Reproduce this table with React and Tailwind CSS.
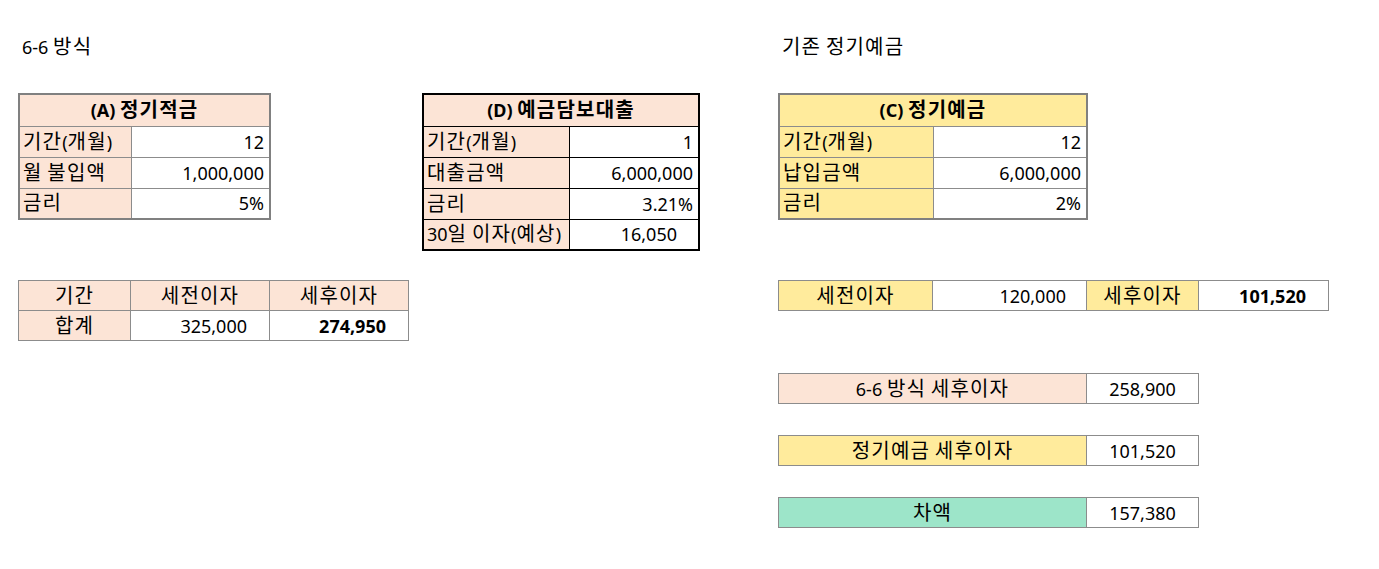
import React from "react";

const font = "font-['Noto_Sans','Noto_Sans_CJK_KR',sans-serif]";
const peach = "bg-[#fce4d6]";
const yellow = "bg-[#ffeb9c]";
const green = "bg-[#9de5c9]";

// Korean runs a bit larger and looser, like Malgun Gothic next to its Latin digits
const K = ({ text }) => (
  <span>
    {text.split(/([\uAC00-\uD7A3]+)/).map((part, i) =>
      /[\uAC00-\uD7A3]/.test(part) ? (
        <span key={i} className="text-[20px] tracking-[1.2px]">
          {part}
        </span>
      ) : (
        <React.Fragment key={i}>{part}</React.Fragment>
      )
    )}
  </span>
);

const Td = ({ className = "", children, colSpan }) => (
  <td colSpan={colSpan} className={`h-[31px] border border-[#8c8c8c] p-0 leading-none ${className}`}>
    <K text={children} />
  </td>
);

const DTd = ({ className = "", children, colSpan }) => (
  <td colSpan={colSpan} className={`h-[31px] border border-black p-0 leading-none ${className}`}>
    <K text={children} />
  </td>
);

const SummaryRow = ({ label, value, bg }) => (
  <table className="table-fixed border-collapse w-[420px]">
    <colgroup>
      <col className="w-[308px]" />
      <col className="w-[112px]" />
    </colgroup>
    <tbody>
      <tr>
        <Td className={`${bg} text-center !h-[30px]`}>{label}</Td>
        <Td className="bg-white text-center !h-[30px]">{value}</Td>
      </tr>
    </tbody>
  </table>
);

export default function App() {
  return (
    <div className={`w-[1379px] h-[569px] bg-white text-black text-[18px] ${font} overflow-hidden`}>
      <div className="flex pt-[31px]">
        {/* left: 6-6 */}
        <div className="ml-[18px] w-[404px] flex flex-col">
          <div className="h-[31px] flex items-center pl-[4px]">
            <K text="6-6 방식" />
          </div>
          <div className="h-[31px]" />
          <table className="table-fixed border-collapse border-2 border-[#808080] w-[251px]">
            <colgroup>
              <col className="w-[112px]" />
              <col className="w-[139px]" />
            </colgroup>
            <tbody>
              <tr>
                <Td colSpan={2} className={`${peach} text-center font-bold !h-[32px]`}>
                  (A) 정기적금
                </Td>
              </tr>
              {[
                ["기간(개월)", "12"],
                ["월 불입액", "1,000,000"],
                ["금리", "5%"],
              ].map(([l, v]) => (
                <tr key={l}>
                  <Td className={`${peach} pl-[3px] whitespace-nowrap`}>{l}</Td>
                  <Td className="bg-white text-right pr-[5px]">{v}</Td>
                </tr>
              ))}
            </tbody>
          </table>
          <div className="h-[60px]" />
          <table className="table-fixed border-collapse w-[390px]">
            <colgroup>
              <col className="w-[112px]" />
              <col className="w-[139px]" />
              <col className="w-[139px]" />
            </colgroup>
            <tbody>
              <tr>
                <Td className={`${peach} text-center !h-[30px]`}>기간</Td>
                <Td className={`${peach} text-center !h-[30px]`}>세전이자</Td>
                <Td className={`${peach} text-center !h-[30px]`}>세후이자</Td>
              </tr>
              <tr>
                <Td className={`${peach} text-center !h-[30px]`}>합계</Td>
                <Td className="bg-white text-right pr-[22px] !h-[30px]">325,000</Td>
                <Td className="bg-white text-right pr-[22px] font-bold !h-[30px]">274,950</Td>
              </tr>
            </tbody>
          </table>
        </div>

        {/* middle: D */}
        <div className="w-[356px] flex flex-col pt-[62px]">
          <table className="table-fixed border-collapse border-2 border-black w-[276px]">
            <colgroup>
              <col className="w-[146px]" />
              <col className="w-[130px]" />
            </colgroup>
            <tbody>
              <tr>
                <DTd colSpan={2} className={`!h-[32px] ${peach} text-center font-bold`}>
                  (D) 예금담보대출
                </DTd>
              </tr>
              {[
                ["기간(개월)", "1", "pr-[5px]"],
                ["대출금액", "6,000,000", "pr-[5px]"],
                ["금리", "3.21%", "pr-[5px]"],
                ["30일 이자(예상)", "16,050", "pr-[21px]"],
              ].map(([l, v, p]) => (
                <tr key={l}>
                  <DTd className={`${peach} pl-[3px] whitespace-nowrap`}>{l}</DTd>
                  <DTd className={`bg-white text-right ${p}`}>{v}</DTd>
                </tr>
              ))}
            </tbody>
          </table>
        </div>

        {/* right: 기존 정기예금 */}
        <div className="w-[560px] flex flex-col">
          <div className="h-[31px] flex items-center pl-[4px]">
            <K text="기존 정기예금" />
          </div>
          <div className="h-[31px]" />
          <table className="table-fixed border-collapse border-2 border-[#808080] w-[308px]">
            <colgroup>
              <col className="w-[154px]" />
              <col className="w-[154px]" />
            </colgroup>
            <tbody>
              <tr>
                <Td colSpan={2} className={`${yellow} text-center font-bold !h-[32px]`}>
                  (C) 정기예금
                </Td>
              </tr>
              {[
                ["기간(개월)", "12"],
                ["납입금액", "6,000,000"],
                ["금리", "2%"],
              ].map(([l, v]) => (
                <tr key={l}>
                  <Td className={`${yellow} pl-[3px] whitespace-nowrap`}>{l}</Td>
                  <Td className="bg-white text-right pr-[5px]">{v}</Td>
                </tr>
              ))}
            </tbody>
          </table>
          <div className="h-[60px]" />
          <table className="table-fixed border-collapse w-[550px]">
            <colgroup>
              <col className="w-[154px]" />
              <col className="w-[154px]" />
              <col className="w-[112px]" />
              <col className="w-[130px]" />
            </colgroup>
            <tbody>
              <tr>
                <Td className={`${yellow} text-center !h-[30px]`}>세전이자</Td>
                <Td className="bg-white text-right pr-[20px] !h-[30px]">120,000</Td>
                <Td className={`${yellow} text-center !h-[30px]`}>세후이자</Td>
                <Td className="bg-white text-right pr-[22px] font-bold !h-[30px]">101,520</Td>
              </tr>
            </tbody>
          </table>
          <div className="h-[62px]" />
          <SummaryRow label="6-6 방식 세후이자" value="258,900" bg={peach} />
          <div className="h-[31px]" />
          <SummaryRow label="정기예금 세후이자" value="101,520" bg={yellow} />
          <div className="h-[31px]" />
          <SummaryRow label="차액" value="157,380" bg={green} />
        </div>
      </div>
    </div>
  );
}
